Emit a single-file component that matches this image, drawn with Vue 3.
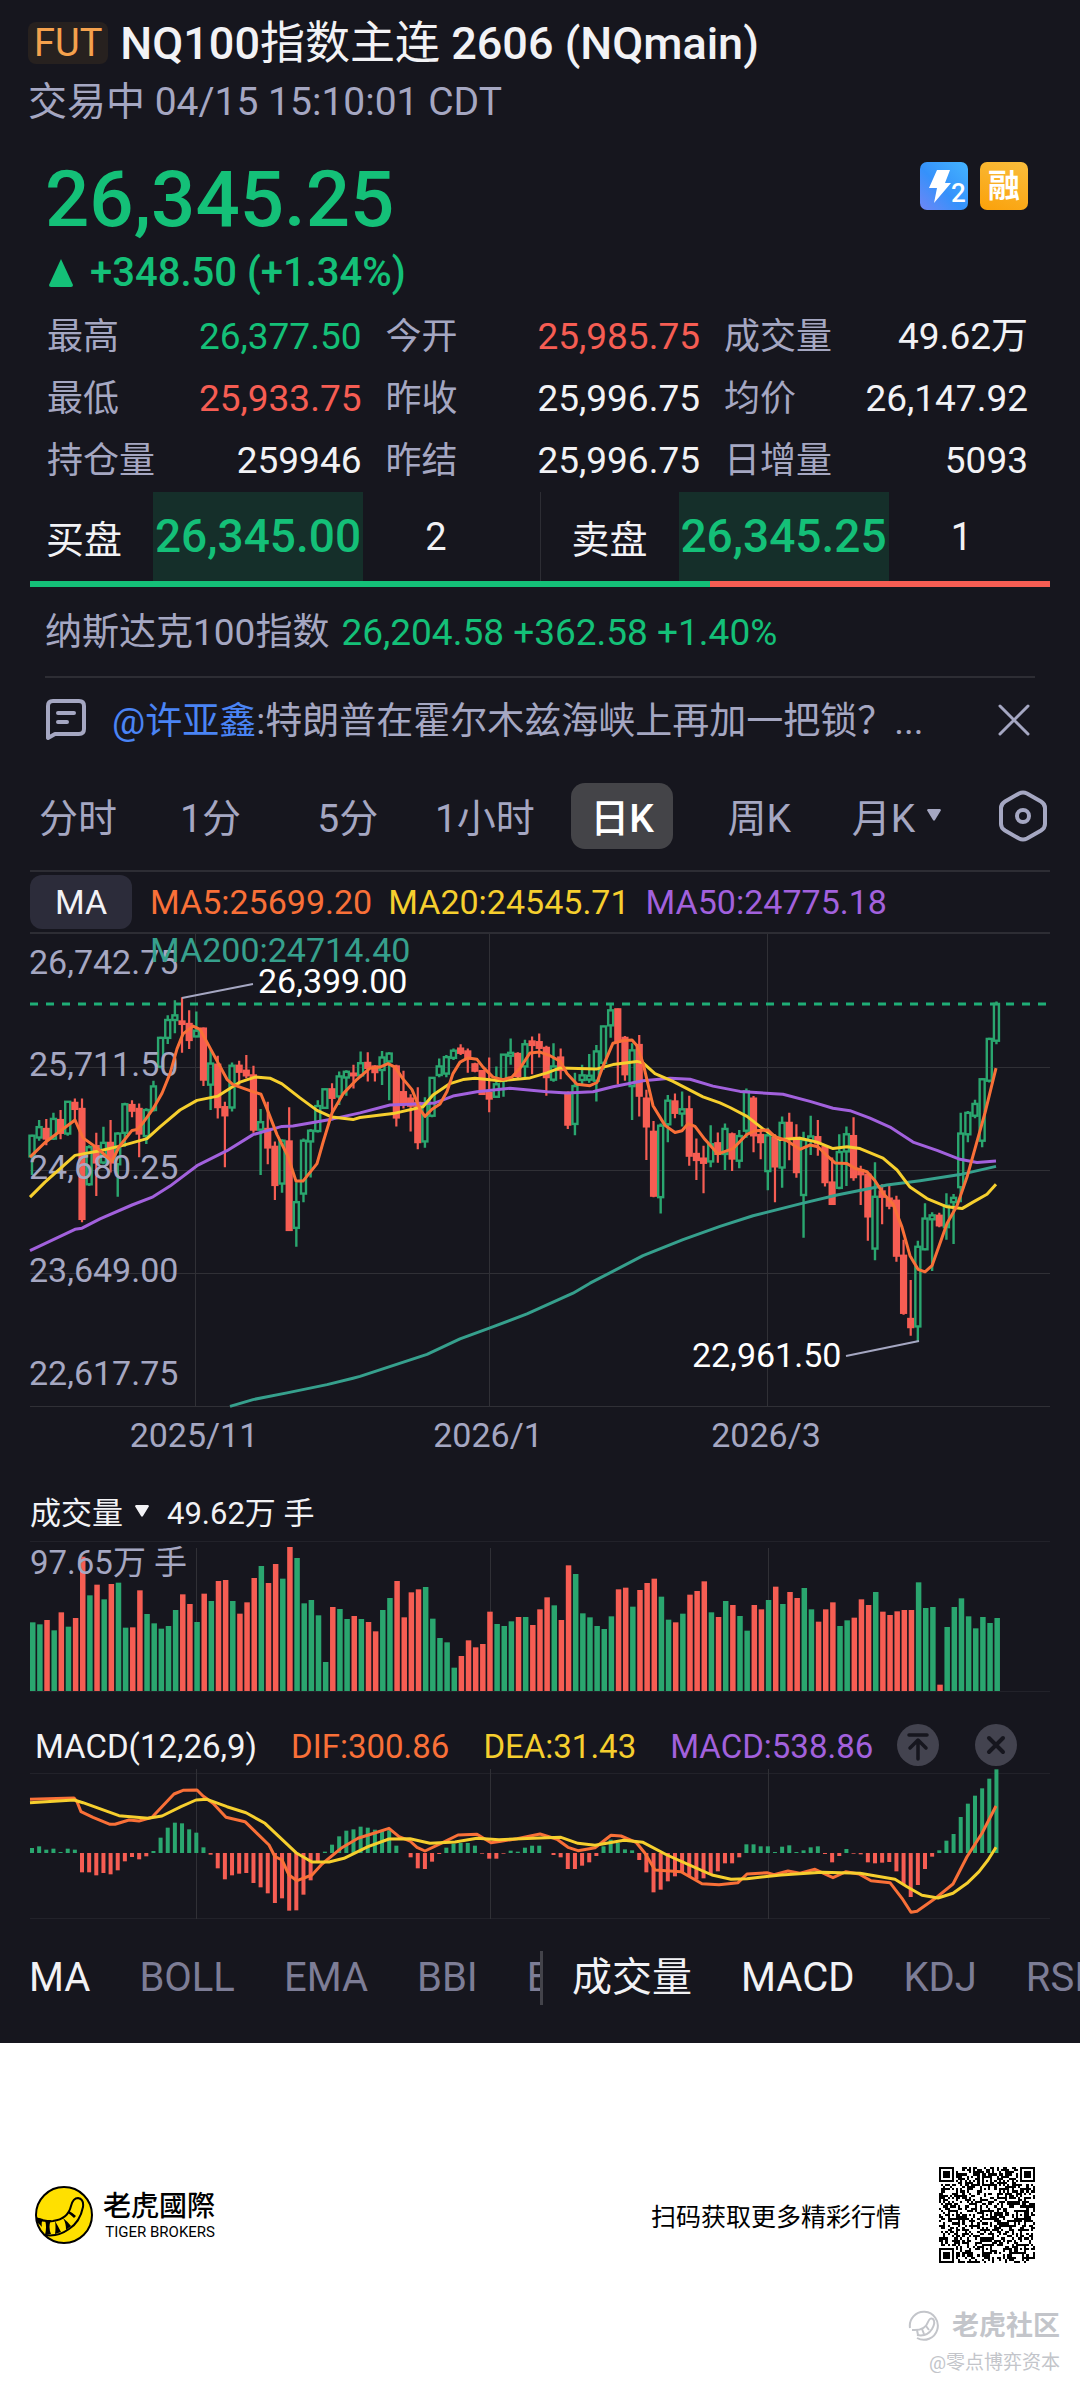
<script setup>
import { ref } from 'vue'

const stats = [
  { label: '最高', value: '26,377.50', tone: 'up' },
  { label: '今开', value: '25,985.75', tone: 'down' },
  { label: '成交量', value: '49.62万' },
  { label: '最低', value: '25,933.75', tone: 'down' },
  { label: '昨收', value: '25,996.75' },
  { label: '均价', value: '26,147.92' },
  { label: '持仓量', value: '259946' },
  { label: '昨结', value: '25,996.75' },
  { label: '日增量', value: '5093' }
]

const quotes = [
  { side: '买盘', price: '26,345.00', size: 2 },
  { side: '卖盘', price: '26,345.25', size: 1 }
]

const buyRatio = 66.7

const periods = ['分时', '1分', '5分', '1小时', '日K', '周K', '月K']
const period = ref('日K')

const mainIndicators = ['MA', 'BOLL', 'EMA', 'BBI', 'ENV']
const subIndicators = ['成交量', 'MACD', 'KDJ', 'RSI']
const activeIndicators = ref(['MA', '成交量', 'MACD'])

const toggleIndicator = (name) => {
  const list = activeIndicators.value
  activeIndicators.value = list.includes(name) ? list.filter((n) => n !== name) : [...list, name]
}

// Shared x axis
const STEP = 7.144
const xAt = (i) => 32 + i * STEP
const months = [
  { x: 196, label: '2025/11' },
  { x: 490, label: '2026/1' },
  { x: 768, label: '2026/3' }
]

// Daily candles: direction, high, body top, body bottom, low
const candleData = `
u601,604,662,714 u560,580,609,618 d557,585,612,631 u540,557,612,616 d532,560,596,614 u507,509,598,604
d500,512,529,563 d500,529,837,846 u631,636,740,744 d596,633,679,773 u579,624,679,684 d560,624,679,707
u594,598,684,775 u512,516,596,635 d505,518,534,552 d514,529,598,664 u527,532,605,627 u450,466,532,536
u327,330,411,415 u267,280,330,347 u225,267,280,317 d216,284,291,372 d253,291,336,361 u256,310,326,328
d301,304,447,465 u363,402,461,532 d380,405,524,556 d509,524,547,692 u399,408,525,536 d394,408,425,461
d378,422,435,443 d408,435,587,596 u529,566,587,714 d509,585,637,684 d620,635,742,784 u614,618,738,764
d524,620,868,870 u734,790,862,915 u612,618,766,790 u585,590,620,721 u505,521,591,595 u472,474,526,529
d457,474,498,546 u424,438,494,518 u421,425,441,492 d405,430,435,472 u368,401,435,441 d370,400,414,452
d407,410,426,452 u367,385,420,462 u370,374,396,505 d405,410,553,578 d422,482,515,528 d488,500,520,592
d468,512,622,642 u496,515,620,638 u440,442,548,552 u388,410,434,440 u378,384,430,440 u360,366,386,392
d348,360,372,378 d360,368,388,428 d400,404,422,426 d420,423,487,490 d385,484,500,538 u410,460,495,498
u375,377,450,495 u332,372,380,405 d370,375,437,448 u335,348,410,440 d326,340,350,432 d318,342,358,385
d352,358,440,492 u345,410,447,453 d360,385,420,446 d480,484,573,585 u428,465,571,603 u405,435,448,460
u375,436,447,456 u350,368,450,508 u296,298,400,420 u235,253,295,330 d248,250,340,460 d325,330,432,450
u345,365,465,560 d322,350,492,550 d475,500,578,672 d563,593,772,776 u570,576,776,822 u490,506,572,622
d486,508,540,555 u480,530,542,578 d492,530,660,688 d612,655,672,728 d632,668,680,765 u575,628,676,692
d595,625,655,680 u570,585,655,700 d595,600,668,703 u588,605,674,695 u472,480,590,610 d493,500,603,650
d590,602,622,670 u582,603,703,757 d600,610,690,790 u550,568,693,750 d540,568,610,673 d572,610,706,722
u593,616,770,890 u548,606,617,658 d560,608,625,660 d632,636,734,746 d665,735,795,797 u600,650,750,754
u578,600,648,745 d552,605,720,730 d688,700,712,798 d705,713,830,898 u678,775,920,953 d740,760,775,852
d742,780,800,810 d772,786,940,957 d895,940,1100,1105 d1008,1117,1140,1164 u898,915,1138,1180 u793,836,922,925
u818,827,838,983 d820,828,855,860 u765,800,860,895 u767,778,790,907 u540,598,748,790 u535,540,600,622
u503,515,548,555 u443,446,618,636 u330,333,450,455 u228,235,338,348`

const priceY = (v) => v / 2.8 - 14

const candles = candleData.trim().split(/\s+/).map((row, i) => {
  const [high, top, bottom, low] = row.slice(1).split(',').map((v) => priceY(+v))
  return { x: xAt(i), up: row[0] === 'u', high, top, bottom, low, body: Math.max(bottom - top, 1) }
})

const toLine = (text, scaleY) =>
  text.trim().split(/\s+/).map((p) => {
    const [x, y] = p.split(',').map(Number)
    return `${x},${scaleY(y).toFixed(1)}`
  }).join(' ')

const averages = [
  {
    name: 'ma200',
    points: toLine(`230,1362 253,1343 287,1324 327,1301 353,1283 360,1278 427,1216 460,1173 490,1142 527,1103
      573,1045 590,1017 643,940 683,895 720,858 753,828 800,795 837,770 887,742 920,730 960,713 996,690`, priceY)
  },
  {
    name: 'ma50',
    points: toLine(`30,926 75,866 82,863 100,837 132,798 153,775 170,745 197,688 227,646 253,601 282,578 293,577
      333,557 360,540 390,518 410,516 435,512 453,493 477,481 510,471 547,481 567,484 593,481 613,467 643,450
      670,443 690,446 713,465 740,480 783,488 810,508 833,527 850,534 870,555 890,580 913,622 937,645 960,670
      977,679 996,675`, priceY)
  },
  {
    name: 'ma20',
    points: toLine(`30,776 45,734 75,659 100,646 123,631 147,612 160,579 180,532 197,505 218,493 240,454 255,440
      270,443 282,459 300,498 317,533 332,552 353,559 360,553 393,542 423,523 433,490 450,458 463,447 475,443
      500,450 530,442 547,428 560,414 597,417 613,405 637,396 643,400 655,430 673,452 703,495 720,512 730,525
      747,550 763,585 780,615 800,611 817,622 833,640 847,635 860,640 883,667 897,700 910,748 927,780 947,803
      962,808 973,790 987,768 996,740`, priceY)
  },
  {
    name: 'ma5',
    points: toLine(`30,664 45,623 75,560 83,610 97,638 112,676 119,635 132,589 137,587 143,568 153,529 162,485
      170,430 177,361 183,319 193,297 200,306 210,358 227,446 233,461 252,480 261,488 267,529 277,601 288,662
      296,731 303,731 317,682 323,623 332,540 343,487 357,446 370,415 380,412 388,402 395,412 403,445 412,475
      420,530 425,550 432,530 440,515 447,480 453,430 460,398 468,386 477,390 483,412 493,440 503,447 512,440
      520,415 530,372 540,370 550,380 560,395 567,430 577,460 590,464 597,455 603,410 613,345 622,338 632,336
      637,352 643,400 653,520 665,575 675,595 682,590 688,570 695,578 705,615 718,655 733,640 747,600 755,590
      768,588 775,607 787,618 800,642 810,630 818,635 827,660 835,680 847,682 855,695 867,705 875,730 883,765
      893,795 902,860 910,940 918,978 925,985 932,968 940,905 947,850 957,800 967,720 975,640 985,540 996,415`, priceY)
  }
]

const priceLabels = [
  { y: 40, text: '26,742.75' },
  { y: 142, text: '25,711.50' },
  { y: 245, text: '24,680.25' },
  { y: 348, text: '23,649.00' },
  { y: 451, text: '22,617.75' }
]

// Volume bars, measured down from the top of the panel
const volumeData = `
u427 u433 d420 u451 d397 u440 d414 d230 u346 d314 u358 d312 u308 u443 d442 d331 u402 u430 u446 u438
u390 d343 d372 u426 d341 u363 d303 d300 u363 d401 d367 d294 u258 d309 d252 u296 d201 u234 u370 u360
u406 u546 d381 u387 u417 d408 u417 d426 d454 u390 u354 d303 d412 d337 d328 u321 u416 u474 u487 u563
d528 d481 d502 d492 d395 u432 u438 u424 d411 u411 d435 d388 d352 u376 d420 d256 u282 u400 u412 u438
u447 u409 d328 d323 u380 d330 d309 d296 u350 u419 d427 u401 d344 d333 d304 u397 d411 u363 d375 u408
u452 d375 d388 u360 d320 u372 d336 d354 u324 u388 d425 d388 d367 u438 u421 d413 d358 d375 u336 d395
d405 d394 d390 d390 u307 u384 u381 d614 u441 u381 u355 u409 u445 u411 u429 u414`

const volumes = volumeData.trim().split(/\s+/).map((row, i) => {
  const y = row.slice(1) / 3 - 61
  return { x: xAt(i), up: row[0] === 'u', y, height: 150 - y }
})

const histogram = [
  15, 20, 10, 13, 3, 13, 10, -58, -58, -67, -60, -64, -52, -25, -12, -19, -10, 6, 46, 76, 91, 89, 71, 61, 17,
  -5, -46, -79, -67, -62, -60, -90, -103, -121, -150, -136, -173, -172, -125, -82, -28, 4, 25, 50, 67, 71, 79,
  76, 70, 66, 68, 22, 0, -13, -46, -48, -26, -3, 16, 28, 30, 30, 22, -2, -17, -17, -2, 7, 4, 16, 22, 22, 0, -6,
  -13, -48, -48, -38, -28, -9, 20, 40, 30, 11, 8, -21, -58, -118, -110, -85, -70, -60, -70, -80, -76, -66, -55,
  -31, -31, -13, 26, 26, 20, 20, 3, 19, 23, 3, 8, 17, 20, -3, -28, -9, 12, -2, -4, -28, -31, -29, -27, -55, -95,
  -132, -96, -48, -11, 8, 37, 57, 108, 148, 172, 194, 223, 251
].map((v, i) => ({ x: xAt(i), up: v > 0, y: v > 0 ? 87 - v / 3 : 87, height: Math.abs(v) / 3 }))

const macdY = (v) => v / 3 - 56

const dif = toLine(`30,268 74,264 77,275 81,305 93,322 110,343 115,343 129,330 139,333 152,322 174,252 183,241
  197,240 203,258 213,280 226,322 245,335 257,370 269,405 275,440 282,450 289,495 297,512 312,495 322,462
  341,415 358,385 377,367 389,355 399,380 410,393 417,412 425,423 441,400 458,375 477,373 491,398 501,394
  517,386 540,372 557,388 568,412 578,422 595,413 611,376 621,378 636,397 645,430 655,480 681,485 702,521
  719,524 738,518 747,492 767,488 774,494 788,483 800,490 815,478 833,503 846,485 859,492 871,512 890,518
  902,565 911,607 917,604 934,568 953,522 967,440 982,370 996,288`, macdY)

const dea = toLine(`30,278 74,270 83,278 119,317 148,325 162,318 181,290 196,270 207,268 227,290 246,308 265,340
  296,428 312,456 329,456 344,445 368,410 389,387 410,386 430,400 455,396 477,385 499,389 540,384 561,382
  578,400 595,406 624,391 643,397 667,435 688,463 712,495 731,508 747,506 781,495 822,487 860,490 895,508
  907,530 922,556 938,564 953,550 967,520 979,485 988,450 996,412`, macdY)

// QR code, 45 modules wide
const QR_SIZE = 45
const squares = [[3, 3, 3], [41, 3, 3], [3, 41, 3], [22, 6, 2], [6, 22, 2], [22, 22, 2], [38, 22, 2], [22, 38, 2], [38, 38, 2]]

const isDark = (x, y) => {
  for (const [cx, cy, r] of squares) {
    const d = Math.max(Math.abs(x - cx), Math.abs(y - cy))
    if (d <= r) return r === 3 ? d !== 2 : d !== 1
    if (r === 3 && d === 4) return false
  }
  if (x === 6 || y === 6) return (x + y) % 2 === 0
  let h = (x * 374761393 + y * 668265263) | 0
  h = Math.imul(h ^ (h >>> 13), 1274126177)
  return ((h ^ (h >>> 16)) & 1) === 1
}

let qrPath = ''
for (let y = 0; y < QR_SIZE; y++) {
  for (let x = 0; x < QR_SIZE; x++) {
    if (isDark(x, y)) qrPath += `M${x} ${y}h1v1h-1z`
  }
}
</script>

<template>
  <div class="page">
    <main class="quote">
      <header class="head">
        <div class="title-row">
          <span class="tag">FUT</span>
          <h1 class="title">NQ100<span class="title-cjk">指数主连</span> 2606 (NQmain)</h1>
        </div>
        <p class="status">交易中 04/15 15:10:01 CDT</p>
      </header>

      <section class="summary">
        <div class="price-row">
          <strong class="price">26,345.25</strong>
          <div class="badges">
            <svg class="badge" viewBox="0 0 48 48" role="img" aria-label="Level 2">
              <defs>
                <linearGradient id="lv2" x1="0" y1="1" x2="1" y2="0">
                  <stop offset="0" stop-color="#6f86f5" />
                  <stop offset="0.45" stop-color="#3591fb" />
                  <stop offset="1" stop-color="#44b4ff" />
                </linearGradient>
              </defs>
              <rect width="48" height="48" rx="7" fill="url(#lv2)" />
              <path d="M17 8h13l-5 13h6L14 41l3-15H9z" fill="#fff" />
              <text x="31" y="40" class="badge-num">2</text>
            </svg>
            <span class="badge margin">融</span>
          </div>
        </div>
        <p class="change">
          <svg class="arrow" viewBox="0 0 24 28"><path d="M12 0L24 26Q24 28 22 28H2Q0 28 0 26z" fill="currentColor" /></svg>
          +348.50 (+1.34%)
        </p>
        <dl class="stats">
          <div v-for="s in stats" :key="s.label" class="stat">
            <dt>{{ s.label }}</dt>
            <dd :class="s.tone">{{ s.value }}</dd>
          </div>
        </dl>
      </section>

      <section class="book">
        <div v-for="q in quotes" :key="q.side" class="book-side">
          <span class="side">{{ q.side }}</span>
          <strong class="book-price">{{ q.price }}</strong>
          <span class="book-size">{{ q.size }}</span>
        </div>
      </section>
      <div class="ratio"><div class="ratio-buy" :style="{ width: buyRatio + '%' }"></div></div>

      <p class="index-line">
        <span>纳斯达克100指数</span>
        <span class="up">26,204.58 +362.58 +1.40%</span>
      </p>

      <div class="news">
        <svg class="news-icon" viewBox="0 0 40 42" fill="none" stroke="currentColor" stroke-width="4" stroke-linecap="round" stroke-linejoin="round">
          <path d="M2 39V7Q2 2 7 2H33Q38 2 38 7V30Q38 35 33 35H9z" />
          <path d="M12 14H28M12 23H21" />
        </svg>
        <p class="news-text"><a href="#">@许亚鑫</a>:特朗普在霍尔木兹海峡上再加一把锁？...</p>
        <button class="icon-button" aria-label="关闭">
          <svg class="close-icon" viewBox="0 0 32 32" stroke="currentColor" stroke-width="3" stroke-linecap="round"><path d="M2 2L30 30M30 2L2 30" /></svg>
        </button>
      </div>

      <nav class="periods">
        <button v-for="p in periods" :key="p" class="period" :class="{ active: p === period }" @click="period = p">
          {{ p }}<svg v-if="p === '月K'" class="caret" viewBox="0 0 14 12"><path d="M1 0H13Q14.500 1 13.500 2L8 11Q7 12.500 6 11L.5 2Q-.5 1 1 0z" fill="currentColor" /></svg>
        </button>
        <button class="icon-button" aria-label="设置">
          <svg class="gear" viewBox="0 0 48 52" fill="none" stroke="currentColor" stroke-width="4">
            <path d="M20 3.500Q24 1.500 28 3.500L42 11.500Q46 14 46 18V34Q46 38 42 40.500L28 48.500Q24 50.500 20 48.500L6 40.500Q2 38 2 34V18Q2 14 6 11.500z" />
            <circle cx="24" cy="26" r="6" />
          </svg>
        </button>
      </nav>

      <section class="legend">
        <button class="legend-name">MA</button>
        <span class="ma5">MA5:25699.20</span>
        <span class="ma20">MA20:24545.71</span>
        <span class="ma50">MA50:24775.18</span>
      </section>

      <svg class="chart" viewBox="0 0 1080 536" role="img" aria-label="日K">
        <g class="grid">
          <path d="M30 133.500H1050M30 236.500H1050M30 339.500H1050M30 472.500H1050" />
          <path v-for="m in months" :key="m.label" :d="`M${m.x - 0.5} 0V472`" />
        </g>
        <path class="last-price" d="M30 70H1050" />
        <g v-for="(c, i) in candles" :key="i" :class="c.up ? 'candle-up' : 'candle-down'">
          <path :d="`M${c.x} ${c.high}V${c.top}M${c.x} ${c.bottom}V${c.low}`" />
          <rect :x="c.x - 2.5" :y="c.top" width="5" :height="c.body" />
        </g>
        <text v-for="l in priceLabels" :key="l.text" class="axis" x="29" :y="l.y">{{ l.text }}</text>
        <polyline v-for="a in averages" :key="a.name" class="line" :class="a.name" :points="a.points" />
        <text class="ma200-label" x="150" y="28">MA200:24714.40</text>
        <path class="leader" d="M182 64L253 50M846 422L919 407" />
        <text class="mark" x="258" y="59">26,399.00</text>
        <text class="mark" x="692" y="433">22,961.50</text>
        <text v-for="m in months" :key="m.x" class="axis" :x="m.x - 2" y="513" text-anchor="middle">{{ m.label }}</text>
      </svg>

      <div class="volume-head">
        <button class="volume-name">
          成交量<svg class="caret" viewBox="0 0 14 12"><path d="M1 0H13Q14.500 1 13.500 2L8 11Q7 12.500 6 11L.5 2Q-.5 1 1 0z" fill="currentColor" /></svg>
        </button>
        <span>49.62万 手</span>
      </div>
      <svg class="chart" viewBox="0 0 1080 152" role="img" aria-label="成交量">
        <path class="grid faint" d="M30 .5H1050M30 150.500H1050" />
        <path v-for="m in months" :key="m.label" class="grid" :d="`M${m.x + 0.5} 7V150`" />
        <rect v-for="(v, i) in volumes" :key="i" :class="v.up ? 'bar-up' : 'bar-down'" :x="v.x - 2" :y="v.y" width="5.5" :height="v.height" />
        <text class="axis volume-max" x="30" y="33">97.65万 手</text>
      </svg>

      <div class="macd-head">
        <div class="macd-values">
          <span>MACD(12,26,9)</span>
          <span class="ma5">DIF:300.86</span>
          <span class="ma20">DEA:31.43</span>
          <span class="ma50">MACD:538.86</span>
        </div>
        <div class="macd-actions">
          <button class="round" aria-label="置顶">
            <svg viewBox="0 0 42 42" fill="none" stroke="currentColor" stroke-width="3.500" stroke-linecap="round" stroke-linejoin="round"><path d="M12 11H30M21 35V17M13 24L21 16L29 24" /></svg>
          </button>
          <button class="round" aria-label="移除">
            <svg viewBox="0 0 42 42" fill="none" stroke="currentColor" stroke-width="4" stroke-linecap="round"><path d="M14 14L28 28M28 14L14 28" /></svg>
          </button>
        </div>
      </div>
      <svg class="chart" viewBox="0 0 1080 156" role="img" aria-label="MACD">
        <path class="grid faint" d="M30 7.500H1050M30 152.500H1050" />
        <path v-for="m in months" :key="m.label" class="grid" :d="`M${m.x + 0.5} 3V153`" />
        <rect v-for="(h, i) in histogram" :key="i" :class="h.up ? 'bar-up' : 'bar-down'" :x="h.x - 2" :y="h.y" width="4" :height="h.height" />
        <polyline class="line ma5" :points="dif" />
        <polyline class="line ma20" :points="dea" />
      </svg>

      <nav class="indicators">
        <div class="indicator-list">
          <button v-for="n in mainIndicators" :key="n" class="indicator" :class="{ active: activeIndicators.includes(n) }" @click="toggleIndicator(n)">{{ n }}</button>
        </div>
        <div class="indicator-list sub-list">
          <button v-for="n in subIndicators" :key="n" class="indicator" :class="{ active: activeIndicators.includes(n) }" @click="toggleIndicator(n)">{{ n }}</button>
        </div>
      </nav>
    </main>

    <footer class="footer">
      <div class="brand-row">
        <svg class="logo" viewBox="0 0 58 58">
          <defs><clipPath id="logo-clip"><circle cx="29" cy="29" r="28" /></clipPath></defs>
          <circle cx="29" cy="29" r="28" fill="#ffe000" />
          <g clip-path="url(#logo-clip)">
            <path d="M0 32Q8 36 18 35Q33 33 36 20Q38 12 43 12Q49 13 48 21Q45 36 34 43Q23 51 10 49" fill="none" stroke="#000" stroke-width="2" />
            <path d="M0 31L8 33Q6 37 7 41L3 37zM10 34H16Q13 41 16 48L10 49Q12 41 10 34zM20 35Q23 40 26 46L20 48Q21 41 20 35zM28 32Q33 36 36 40L31 44Q31 37 28 32zM34 25Q38 27 41 30L39 32Q36 29 33 27z" fill="#000" />
          </g>
          <circle cx="29" cy="29" r="28" fill="none" stroke="#000" stroke-width="2" />
        </svg>
        <div class="brand">
          <span class="brand-name">老虎國際</span>
          <span class="brand-sub">TIGER BROKERS</span>
        </div>
        <p class="scan">扫码获取更多精彩行情</p>
        <svg class="qr" :viewBox="`0 0 ${QR_SIZE} ${QR_SIZE}`" shape-rendering="crispEdges" role="img" aria-label="QR"><path :d="qrPath" /></svg>
      </div>
      <div class="watermark">
        <p class="community">
          <svg class="community-icon" viewBox="0 0 32 32" fill="none" stroke="currentColor">
            <path d="M2 18A14 14 0 1 1 9 28" stroke-width="2" />
            <path d="M4 20Q17 21 20 12Q22 7 25 9Q28 12 24 19Q19 27 9 25" stroke-width="2" />
            <path d="M9 20L10 25M14 19L16 24M18 16L21 20" stroke-width="2" />
          </svg>
          老虎社区
        </p>
        <p class="author">@零点博弈资本</p>
      </div>
    </footer>
  </div>
</template>

<style>
body {
  margin: 0;
  background: #fff;
}
</style>

<style scoped>
.page {
  --green: #14c078;
  --red: #f65d53;
  --muted: #a5a7c2;
  --rule: #2d2d34;
  --bg: #16161e;
  font-family: Roboto, "Noto Sans CJK SC", sans-serif;
  overflow: hidden;
}

.page * {
  box-sizing: border-box;
}

p, h1, dl, dd {
  margin: 0;
}

button {
  padding: 0;
  border: 0;
  background: none;
  color: inherit;
  font: inherit;
  cursor: pointer;
}

.quote {
  background: var(--bg);
  color: #f2f2f5;
}

.up {
  color: var(--green);
}

.down {
  color: var(--red);
}

.head {
  padding: 14px 28px 0;
}

.title-row {
  display: flex;
  align-items: center;
  gap: 12px;
}

.title {
  padding-top: 2px;
  font-size: 45px;
  font-weight: 500;
  line-height: 56px;
}

.title-cjk {
  font-weight: 400;
}

.tag {
  padding: 0 6px;
  border-radius: 8px;
  background: #27211f;
  color: #f5a14d;
  font-size: 38px;
  line-height: 42px;
}

.status {
  margin-top: 6px;
  color: var(--muted);
  font-size: 39px;
  line-height: 48px;
}

.summary {
  padding: 34px 52px 0 45px;
}

.price-row {
  display: flex;
  justify-content: space-between;
}

.price {
  color: var(--green);
  font-size: 78px;
  font-weight: 500;
  line-height: 80px;
}

.badges {
  display: flex;
  gap: 12px;
  padding-top: 2px;
}

.badge {
  width: 48px;
  height: 48px;
}

.badge-num {
  fill: #fff;
  font-size: 26px;
  font-weight: 500;
}

.margin {
  border-radius: 7px;
  background: linear-gradient(200deg, #f9bd3c, #fba10a);
  color: #fff;
  font-size: 32px;
  font-weight: 700;
  line-height: 48px;
  text-align: center;
}

.change {
  display: flex;
  align-items: center;
  gap: 17px;
  margin-top: 9px;
  color: var(--green);
  font-size: 40px;
  font-weight: 500;
  line-height: 48px;
}

.arrow {
  width: 24px;
  height: 28px;
  margin-left: 4px;
}

.stats {
  display: grid;
  grid-template-columns: 1fr 1fr 304px;
  column-gap: 24px;
  margin-top: 9px;
  padding-left: 2px;
}

.stat {
  display: flex;
  justify-content: space-between;
  font-size: 37px;
  line-height: 62px;
}

.stat dt {
  color: var(--muted);
  font-size: 36px;
}

.book {
  display: flex;
  padding: 0 15px;
}

.book-side {
  display: flex;
  flex: 1;
  align-items: center;
  height: 89px;
  padding-left: 31px;
  font-size: 38px;
}

.book-side + .book-side {
  border-left: 1px solid var(--rule);
}

.side {
  width: 107px;
}

.book-price {
  width: 210px;
  background: #152f2a;
  color: var(--green);
  font-size: 46px;
  font-weight: 500;
  line-height: 89px;
  text-align: center;
}

.book-size {
  width: 146px;
  text-align: center;
}

.ratio {
  height: 6px;
  margin: 0 30px;
  background: var(--red);
}

.ratio-buy {
  height: 6px;
  background: var(--green);
}

.index-line {
  display: flex;
  gap: 12px;
  margin: 0 45px;
  padding-top: 2px;
  border-bottom: 2px solid var(--rule);
  color: var(--muted);
  font-size: 37px;
  line-height: 87px;
}

.news {
  display: flex;
  align-items: center;
  height: 84px;
  padding: 0 50px 0 46px;
  color: var(--muted);
}

.news-icon {
  width: 40px;
  height: 42px;
}

.news-text {
  flex: 1;
  padding: 4px 0 0 26px;
  overflow: hidden;
  font-size: 37px;
  line-height: 48px;
  white-space: nowrap;
}

.news-text a {
  color: #4a84f5;
  text-decoration: none;
}

.icon-button {
  display: flex;
  align-items: center;
  justify-content: center;
}

.close-icon {
  width: 32px;
  height: 32px;
}

.periods {
  display: grid;
  grid-template-columns: 128px repeat(6, 1fr) 115px;
  align-items: center;
  height: 108px;
  padding-left: 14px;
  color: var(--muted);
  font-size: 39px;
}

.period {
  display: flex;
  align-items: center;
  justify-content: center;
  justify-self: center;
  height: 66px;
  padding-bottom: 2px;
}

.period.active {
  padding: 0 19px 2px;
  border-radius: 14px;
  background: #444448;
  color: #fff;
  font-weight: 500;
}

.caret {
  width: 14px;
  height: 12px;
  margin-left: 12px;
}

.gear {
  width: 48px;
  height: 52px;
}

.legend {
  display: flex;
  align-items: center;
  gap: 16px;
  height: 64px;
  margin: 0 30px;
  border-top: 2px solid var(--rule);
  border-bottom: 2px solid var(--rule);
  font-size: 34px;
}

.legend-name {
  width: 102px;
  height: 54px;
  margin-right: 2px;
  border-radius: 12px;
  background: #2c2c3a;
}

.ma5 {
  color: #f97038;
  stroke: #f97038;
}

.ma20 {
  color: #f6cf2e;
  stroke: #f6cf2e;
}

.ma50 {
  color: #a261dd;
  stroke: #a261dd;
}

.ma200 {
  stroke: #36a08d;
}

.chart {
  display: block;
  width: 100%;
}

.grid {
  fill: none;
  stroke: #303036;
}

.faint {
  stroke: #22222a;
}

.line {
  fill: none;
  stroke-width: 3;
  stroke-linejoin: round;
}

.last-price {
  stroke: #1fae77;
  stroke-width: 3;
  stroke-dasharray: 8 8;
}

.candle-up {
  fill: none;
  stroke: #2aa66f;
  stroke-width: 2.4;
}

.candle-down {
  fill: #f65d53;
  stroke: #f65d53;
  stroke-width: 2.2;
}

.bar-up {
  fill: #2aa66f;
}

.bar-down {
  fill: #f65d53;
}

.axis {
  fill: var(--muted);
  font-size: 34px;
}

.volume-max {
  font-size: 33px;
}

.mark {
  fill: #fff;
  font-size: 34px;
}

.ma200-label {
  fill: #36a08d;
  font-size: 34px;
}

.leader {
  stroke: var(--muted);
  stroke-width: 2;
}

.volume-head {
  display: flex;
  align-items: center;
  gap: 18px;
  height: 61px;
  margin-top: 10px;
  padding: 0 30px;
  font-size: 31px;
}

.volume-name {
  display: flex;
  align-items: center;
}

.macd-head {
  display: flex;
  align-items: center;
  justify-content: space-between;
  height: 42px;
  margin-top: 31px;
  padding: 0 63px 0 35px;
  font-size: 33px;
}

.macd-values {
  display: flex;
  gap: 34px;
  padding-top: 2px;
}

.macd-actions {
  display: flex;
  gap: 36px;
}

.round {
  width: 42px;
  height: 42px;
  border-radius: 50%;
  background: #43434f;
  color: var(--bg);
}

.round svg {
  display: block;
}

.indicators {
  display: grid;
  grid-template-columns: 1fr 1fr;
  align-items: center;
  height: 121px;
  padding-bottom: 9px;
  color: #7d7d96;
  font-size: 40px;
}

.indicator-list {
  display: flex;
  gap: 49px;
  min-width: 0;
  padding-left: 29px;
  overflow: hidden;
  line-height: 54px;
}

.indicator {
  flex: none;
  white-space: nowrap;
}

.indicator.active {
  color: #f2f2f5;
}

.sub-list {
  border-left: 3px solid #43434a;
}

.footer {
  padding: 124px 20px 0 35px;
  color: #000;
}

.brand-row {
  display: flex;
  align-items: center;
  height: 96px;
  padding-right: 25px;
}

.logo {
  width: 58px;
  height: 58px;
}

.brand {
  display: flex;
  flex-direction: column;
  align-items: flex-end;
  margin-left: 10px;
}

.brand-name {
  font-family: Roboto, "Noto Sans CJK TC", sans-serif;
  font-size: 28px;
  font-weight: 500;
  line-height: 34px;
}

.brand-sub {
  font-size: 15px;
  line-height: 16px;
}

.scan {
  margin-left: auto;
  font-size: 25px;
}

.qr {
  width: 96px;
  height: 96px;
  margin-left: 38px;
}

.watermark {
  padding: 44px 0 11px;
  color: #c3c5ca;
  text-align: right;
}

.community {
  display: flex;
  align-items: center;
  justify-content: flex-end;
  gap: 12px;
  font-size: 27px;
  font-weight: 700;
  line-height: 38px;
}

.community-icon {
  width: 32px;
  height: 32px;
}

.author {
  margin-top: 4px;
  font-size: 19px;
  line-height: 28px;
}
</style>
